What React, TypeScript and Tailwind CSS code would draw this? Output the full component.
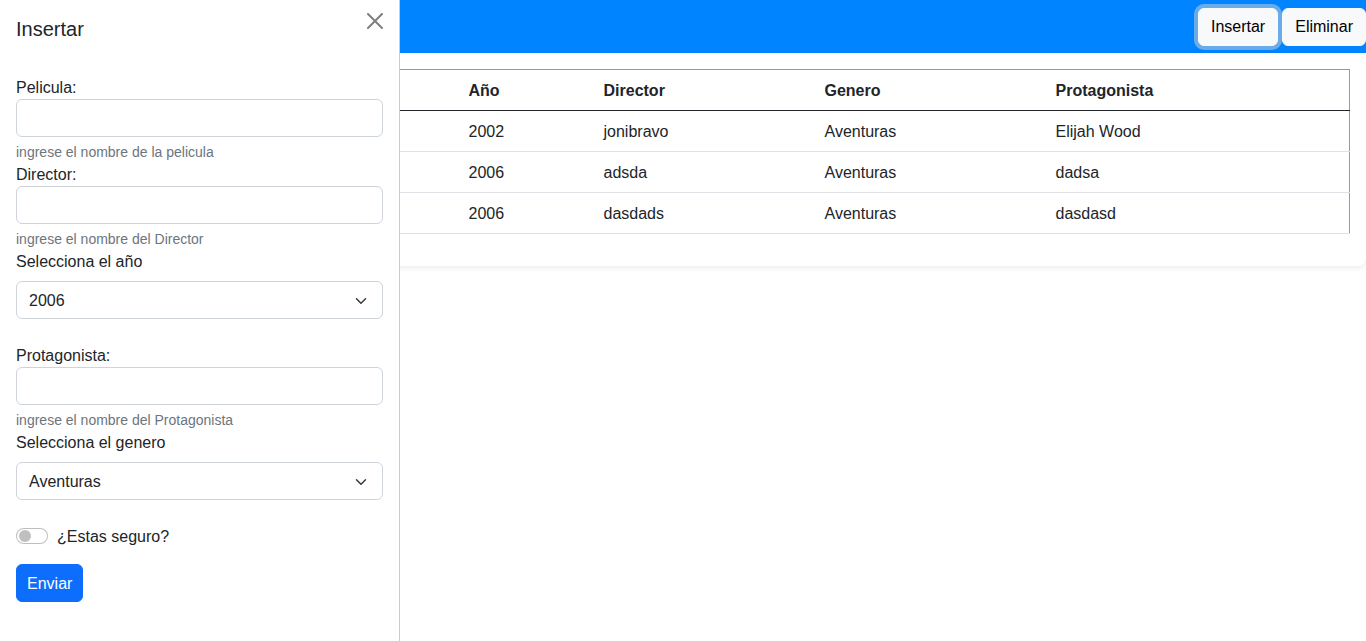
import React from "react";

const rows = [
  { id: 1, pelicula: "El señor de los anillos", anio: "2002", director: "jonibravo", genero: "Aventuras", prota: "Elijah Wood" },
  { id: 2, pelicula: "asdasd", anio: "2006", director: "adsda", genero: "Aventuras", prota: "dadsa" },
  { id: 3, pelicula: "dasdasd", anio: "2006", director: "dasdads", genero: "Aventuras", prota: "dasdasd" },
];

function Chevron() {
  return (
    <svg width="16" height="12" viewBox="0 0 16 16" className="absolute right-[13px] top-[13px]">
      <path d="m2 5 6 6 6-6" fill="none" stroke="#343a40" strokeWidth="2" strokeLinecap="round" strokeLinejoin="round" />
    </svg>
  );
}

function SelectBox({ value }: { value: string }) {
  return (
    <div className="relative h-[38px] w-full rounded-[6px] border border-[#ced4da] bg-white">
      <div className="pl-3 pt-px leading-[35px] text-[16px] text-[#212529]">{value}</div>
      <Chevron />
    </div>
  );
}

function TextInput() {
  return <div className="h-[38px] w-full rounded-[6px] border border-[#ced4da] bg-white" />;
}

export default function App() {
  return (
    <div className="relative min-h-screen bg-white text-[#212529]" style={{ fontFamily: '"Liberation Sans", Arial, sans-serif' }}>
      {/* Navbar */}
      <div className="flex h-[53px] items-center justify-end gap-1 bg-[#0084ff]">
        <button className="h-[38px] rounded-[6px] border border-[#f8f9fa] bg-[#f8f9fa] px-3 pt-px text-[16px] text-black ring-4 ring-[#d3d4d5]/50">
          Insertar
        </button>
        <button className="h-[38px] rounded-[6px] border border-[#f8f9fa] bg-[#f8f9fa] px-3 pt-px text-[16px] text-black">
          Eliminar
        </button>
      </div>

      {/* Card with table */}
      <div className="rounded-b-[8px] bg-white p-4 shadow-[0_2px_6px_rgba(0,0,0,0.08)]">
        <table className="mb-4 w-full table-fixed border-collapse border-x border-t border-[#999] text-left text-[16px]">
          <thead>
            <tr className="border-b border-[#212529]">
              <th className="w-[100px] px-2 pt-[9px] pb-[7px] font-bold leading-6">#</th>
              <th className="w-[344px] px-2 pt-[9px] pb-[7px] font-bold leading-6">Pelicula</th>
              <th className="w-[135px] px-2 pt-[9px] pb-[7px] font-bold leading-6">Año</th>
              <th className="w-[221px] px-2 pt-[9px] pb-[7px] font-bold leading-6">Director</th>
              <th className="w-[231px] px-2 pt-[9px] pb-[7px] font-bold leading-6">Genero</th>
              <th className="px-2 pt-[9px] pb-[7px] font-bold leading-6">Protagonista</th>
            </tr>
          </thead>
          <tbody>
            {rows.map((r) => (
              <tr key={r.id} className="border-b border-[#dee2e6]">
                <td className="px-2 pt-[9px] pb-[7px] leading-6">{r.id}</td>
                <td className="px-2 pt-[9px] pb-[7px] leading-6">{r.pelicula}</td>
                <td className="px-2 pt-[9px] pb-[7px] leading-6">{r.anio}</td>
                <td className="px-2 pt-[9px] pb-[7px] leading-6">{r.director}</td>
                <td className="px-2 pt-[9px] pb-[7px] leading-6">{r.genero}</td>
                <td className="px-2 pt-[9px] pb-[7px] leading-6">{r.prota}</td>
              </tr>
            ))}
          </tbody>
        </table>
      </div>

      {/* Offcanvas */}
      <div className="fixed left-0 top-0 flex h-screen w-[400px] flex-col border-r border-black/20 bg-white">
        <div className="flex items-start justify-between px-4 pt-[17px]">
          <h5 className="text-[20px] font-medium leading-6">Insertar</h5>
          <svg width="16" height="16" viewBox="0 0 16 16" className="mt-[-4px]" fill="#7f7f7f">
            <path d="M.293.293a1 1 0 0 1 1.414 0L8 6.586 14.293.293a1 1 0 1 1 1.414 1.414L9.414 8l6.293 6.293a1 1 0 0 1-1.414 1.414L8 9.414l-6.293 6.293a1 1 0 0 1-1.414-1.414L6.586 8 .293 1.707a1 1 0 0 1 0-1.414z" />
          </svg>
        </div>
        <div className="flex flex-col px-4 pt-[34px] text-[16px]">
          <label className="relative top-px leading-6">Pelicula:</label>
          <TextInput />
          <div className="relative top-px mt-1 text-[14px] leading-[21px] text-[#6c757d]">ingrese el nombre de la pelicula</div>
          <label className="relative top-px leading-6">Director:</label>
          <TextInput />
          <div className="relative top-px mt-1 text-[14px] leading-[21px] text-[#6c757d]">ingrese el nombre del Director</div>
          <label className="relative top-px mb-2 leading-6">Selecciona el año</label>
          <SelectBox value="2006" />
          <label className="relative top-px mt-6 leading-6">Protagonista:</label>
          <TextInput />
          <div className="relative top-px mt-1 text-[14px] leading-[21px] text-[#6c757d]">ingrese el nombre del Protagonista</div>
          <label className="relative top-px mb-2 leading-6">Selecciona el genero</label>
          <SelectBox value="Aventuras" />
          <div className="mt-6 flex h-6 items-center">
            <div className="flex h-4 w-8 items-center rounded-full border border-black/25 bg-white px-[2px]">
              <div className="h-[12px] w-[12px] rounded-full bg-[#bfbfbf]" />
            </div>
            <span className="relative top-px ml-[9px] leading-6">¿Estas seguro?</span>
          </div>
          <div className="mt-4">
            <button className="h-[38px] rounded-[6px] border border-[#0d6efd] bg-[#0d6efd] px-[10px] pt-px text-[16px] text-white">Enviar</button>
          </div>
        </div>
      </div>
    </div>
  );
}
